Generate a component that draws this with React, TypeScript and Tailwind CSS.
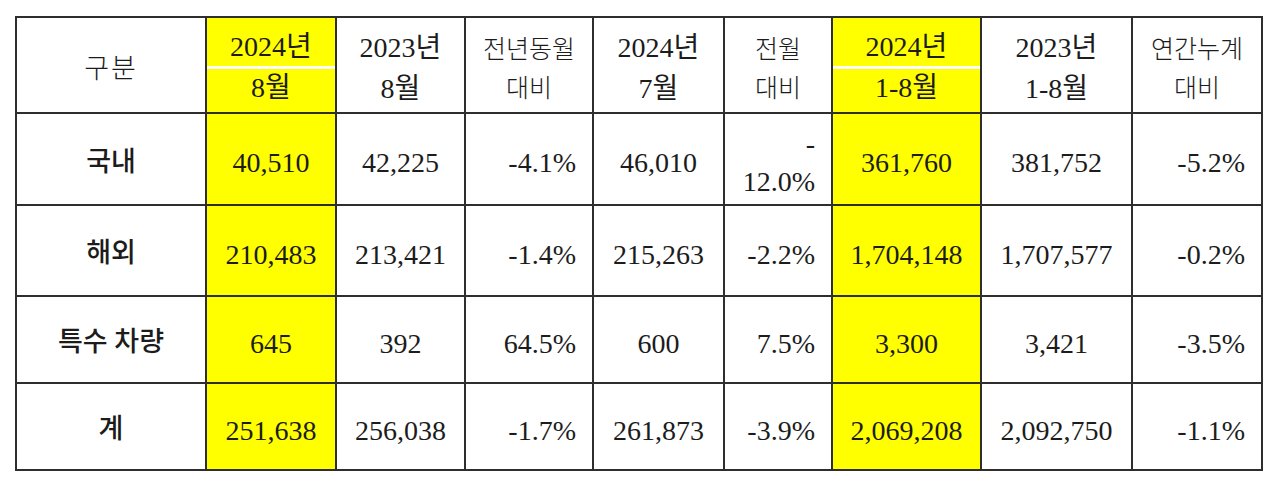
const colWidths = ["w-[190px]", "w-[130px]", "w-[129px]", "w-[128px]", "w-[131px]", "w-[108px]", "w-[149px]", "w-[151px]", "w-[130px]"];

type Head = { top: string; bottom?: string; yellow?: boolean; hangul?: boolean };

const heads: Head[] = [
  { top: "구분" },
  { top: "2024년", bottom: "8월", yellow: true },
  { top: "2023년", bottom: "8월" },
  { top: "전년동월", bottom: "대비", hangul: true },
  { top: "2024년", bottom: "7월" },
  { top: "전월", bottom: "대비", hangul: true },
  { top: "2024년", bottom: "1-8월", yellow: true },
  { top: "2023년", bottom: "1-8월" },
  { top: "연간누계", bottom: "대비", hangul: true },
];

const rows = [
  { label: "국내", h: "h-[90px]", values: ["40,510", "42,225", "-4.1%", "46,010", "-\n12.0%", "361,760", "381,752", "-5.2%"] },
  { label: "해외", h: "h-[89px]", values: ["210,483", "213,421", "-1.4%", "215,263", "-2.2%", "1,704,148", "1,707,577", "-0.2%"] },
  { label: "특수 차량", h: "h-[85px]", values: ["645", "392", "64.5%", "600", "7.5%", "3,300", "3,421", "-3.5%"] },
  { label: "계", h: "h-[85px]", values: ["251,638", "256,038", "-1.7%", "261,873", "-3.9%", "2,069,208", "2,092,750", "-1.1%"] },
];

// value columns that are right aligned (percent columns)
const rightCols = [2, 4, 7];
const yellowCols = [0, 5];

const HeaderCell = ({ head }: { head: Head }) => {
  if (head.yellow) {
    return (
      <td className="border-2 border-[#2e2e2e] p-0 align-top">
        <div className="flex h-[94px] flex-col">
          <div className="flex h-[48px] items-end justify-center bg-[#ffff00] pb-[1px] leading-[36px]">{head.top}</div>
          <div className="h-[3px] bg-white" />
          <div className="flex flex-1 items-start justify-center bg-[#ffff00] pt-[1px] leading-[36px]">{head.bottom}</div>
        </div>
      </td>
    );
  }
  if (!head.bottom) {
    return (
      <td className="border-2 border-[#2e2e2e] p-0">
        <div className="flex h-[94px] items-center justify-center pt-[8px] text-[27px] font-light tracking-[2px]">{head.top}</div>
      </td>
    );
  }
  return (
    <td className="border-2 border-[#2e2e2e] p-0 align-top">
      <div
        className={`flex h-[94px] flex-col items-center leading-[39px] ${
          head.hangul ? "pt-[12px] text-[25px] font-light" : "pt-[9px] leading-[41px]"
        }`}
      >
        <span>{head.top}</span>
        <span>{head.bottom}</span>
      </div>
    </td>
  );
};

export default function App() {
  return (
    <div className="min-h-[486px] bg-white pl-[15px] pt-[16px] font-['Liberation_Serif','Noto_Sans_CJK_KR',serif] text-[28px] text-[#1c1c1c]">
      <table className="table-fixed border-collapse">
        <colgroup>
          {colWidths.map((w, i) => (
            <col key={i} className={w} />
          ))}
        </colgroup>
        <thead>
          <tr>
            {heads.map((h, i) => (
              <HeaderCell key={i} head={h} />
            ))}
          </tr>
        </thead>
        <tbody>
          {rows.map((row) => (
            <tr key={row.label}>
              <td className="border-2 border-[#2e2e2e] p-0">
                <div className={`flex ${row.h} items-center justify-center pt-[6px] text-[27px] font-medium`}>{row.label}</div>
              </td>
              {row.values.map((v, i) => {
                const right = rightCols.includes(i);
                const yellow = yellowCols.includes(i);
                return (
                  <td key={i} className={`border-2 border-[#2e2e2e] p-0 ${yellow ? "bg-[#ffff00]" : ""}`}>
                    <div
                      className={`flex ${row.h} flex-col justify-center whitespace-pre-line pt-[8px] leading-[38px] ${
                        right ? "items-end pr-[16px] text-right" : "items-center text-center"
                      }`}
                    >
                      {v}
                    </div>
                  </td>
                );
              })}
            </tr>
          ))}
        </tbody>
      </table>
    </div>
  );
}
